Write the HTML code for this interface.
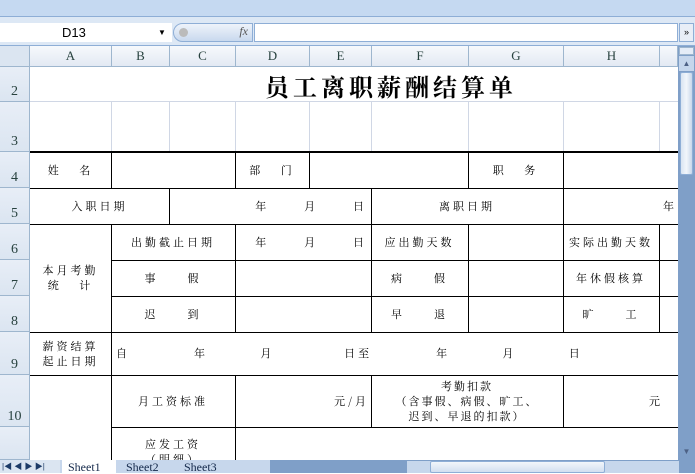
<!DOCTYPE html>
<html><head><meta charset="utf-8"><style>
*{margin:0;padding:0;box-sizing:border-box}
body{width:695px;height:473px;overflow:hidden;background:#fff;position:relative;font-family:"Liberation Sans","Noto Sans CJK SC",sans-serif}
.a{position:absolute}
.t{position:absolute;font-family:"Noto Serif CJK SC","Liberation Serif",serif;font-size:11px;letter-spacing:3px;color:#000;white-space:nowrap;display:flex;align-items:center;justify-content:center;text-align:center;line-height:15px}
.h{position:absolute;left:0;width:30px;background:linear-gradient(#e8eef7,#dbe5f1);border-bottom:1px solid #9eb6ce;border-right:1px solid #9eb6ce;font-family:"Liberation Serif",serif;font-size:14px;color:#27413e;text-align:center;display:flex;align-items:flex-end;justify-content:center;padding-bottom:1px}
.c{position:absolute;top:46px;height:21px;background:linear-gradient(#f7f9fc,#e3e9f3);border-right:1px solid #9eb6ce;border-bottom:1px solid #9eb6ce;font-family:"Liberation Serif",serif;font-size:13px;color:#27413e;display:flex;align-items:center;justify-content:center}
.gv{position:absolute;width:1px;background:#d0d7e5}
.gh{position:absolute;height:1px;background:#d0d7e5}
.bv{position:absolute;width:1px;background:#000}
.bh{position:absolute;height:1px;background:#000}
</style></head><body>
<div class="a" style="left:0;top:0;width:695px;height:17px;background:#c5d9f1;border-bottom:1px solid #8eaed6"></div>
<div class="a" style="left:0;top:17px;width:695px;height:29px;background:#dde8f5"></div>
<div class="a" style="left:0;top:23px;width:172px;height:19px;background:#fff;font-size:13px;padding-left:62px;line-height:19px">D13<span style="position:absolute;left:158px;top:0;font-size:8px">▼</span></div>
<div class="a" style="left:173px;top:23px;width:80px;height:19px;border-radius:10px 0 0 10px;background:linear-gradient(#eef3fa,#c9d9ee);border:1px solid #8eaed6"><span style="position:absolute;right:4px;top:0;font-family:'Liberation Serif',serif;font-style:italic;font-size:12px;color:#555">fx</span><span style="position:absolute;left:5px;top:4px;width:9px;height:9px;border-radius:50%;background:#bbb"></span></div>
<div class="a" style="left:254px;top:23px;width:424px;height:19px;background:#fff;border:1px solid #8eaed6"></div>
<div class="a" style="left:679px;top:23px;width:15px;height:19px;background:#e8eef7;border:1px solid #8eaed6;font-size:9px;text-align:center;line-height:16px">»</div>
<div class="a" style="left:0;top:42px;width:695px;height:4px;background:#dde8f5;border-bottom:1px solid #8eaed6"></div>
<div class="a" style="left:0;top:46px;width:30px;height:21px;background:#dbe5f1;border-right:1px solid #9eb6ce;border-bottom:1px solid #9eb6ce"></div>
<div class="c" style="left:30px;width:82px">A</div>
<div class="c" style="left:112px;width:58px">B</div>
<div class="c" style="left:170px;width:66px">C</div>
<div class="c" style="left:236px;width:74px">D</div>
<div class="c" style="left:310px;width:62px">E</div>
<div class="c" style="left:372px;width:97px">F</div>
<div class="c" style="left:469px;width:95px">G</div>
<div class="c" style="left:564px;width:96px">H</div>
<div class="c" style="left:660px;width:18px"></div>
<div class="h" style="top:67px;height:35px">2</div>
<div class="h" style="top:102px;height:50px">3</div>
<div class="h" style="top:152px;height:36px">4</div>
<div class="h" style="top:188px;height:36px">5</div>
<div class="h" style="top:224px;height:36px">6</div>
<div class="h" style="top:260px;height:36px">7</div>
<div class="h" style="top:296px;height:36px">8</div>
<div class="h" style="top:332px;height:43px">9</div>
<div class="h" style="top:375px;height:52px">10</div>
<div class="h" style="top:427px;height:33px"></div>
<div class="gh" style="left:30px;top:101px;width:648px"></div>
<div class="gv" style="left:111px;top:102px;height:50px"></div>
<div class="gv" style="left:169px;top:102px;height:50px"></div>
<div class="gv" style="left:235px;top:102px;height:50px"></div>
<div class="gv" style="left:309px;top:102px;height:50px"></div>
<div class="gv" style="left:371px;top:102px;height:50px"></div>
<div class="gv" style="left:468px;top:102px;height:50px"></div>
<div class="gv" style="left:563px;top:102px;height:50px"></div>
<div class="gv" style="left:659px;top:102px;height:50px"></div>
<div class="a" style="left:30px;top:66px;width:648px;height:38px;display:flex;align-items:center;justify-content:center;padding-left:74px;font-family:'Noto Serif CJK SC',serif;font-size:24px;font-weight:bold;letter-spacing:4px;color:#000">员工离职薪酬结算单</div>
<div class="bh" style="left:30px;top:151px;width:648px;height:2px"></div>
<div class="bh" style="left:30px;top:188px;width:648px"></div>
<div class="bh" style="left:30px;top:224px;width:648px"></div>
<div class="bh" style="left:111px;top:260px;width:567px"></div>
<div class="bh" style="left:111px;top:296px;width:567px"></div>
<div class="bh" style="left:30px;top:332px;width:648px"></div>
<div class="bh" style="left:30px;top:375px;width:648px"></div>
<div class="bh" style="left:111px;top:427px;width:567px"></div>
<div class="bv" style="left:111px;top:152px;height:36px"></div>
<div class="bv" style="left:235px;top:152px;height:36px"></div>
<div class="bv" style="left:309px;top:152px;height:36px"></div>
<div class="bv" style="left:468px;top:152px;height:36px"></div>
<div class="bv" style="left:563px;top:152px;height:36px"></div>
<div class="bv" style="left:169px;top:188px;height:36px"></div>
<div class="bv" style="left:371px;top:188px;height:36px"></div>
<div class="bv" style="left:563px;top:188px;height:36px"></div>
<div class="bv" style="left:111px;top:224px;height:108px"></div>
<div class="bv" style="left:235px;top:224px;height:108px"></div>
<div class="bv" style="left:371px;top:224px;height:108px"></div>
<div class="bv" style="left:468px;top:224px;height:108px"></div>
<div class="bv" style="left:563px;top:224px;height:108px"></div>
<div class="bv" style="left:659px;top:224px;height:108px"></div>
<div class="bv" style="left:111px;top:332px;height:128px"></div>
<div class="bv" style="left:235px;top:375px;height:85px"></div>
<div class="bv" style="left:371px;top:375px;height:52px"></div>
<div class="bv" style="left:563px;top:375px;height:52px"></div>
<div class="t" style="left:30px;top:152px;width:81px;height:36px">姓&nbsp;&nbsp;&nbsp;名</div>
<div class="t" style="left:235px;top:152px;width:74px;height:36px">部&nbsp;&nbsp;&nbsp;门</div>
<div class="t" style="left:468px;top:152px;width:95px;height:36px">职&nbsp;&nbsp;&nbsp;务</div>
<div class="t" style="left:30px;top:188px;width:139px;height:36px">入职日期</div>
<div class="t" style="left:169px;top:188px;width:202px;height:36px;justify-content:flex-end;padding-right:4px">年&nbsp;&nbsp;&nbsp;&nbsp;&nbsp;&nbsp;月&nbsp;&nbsp;&nbsp;&nbsp;&nbsp;&nbsp;日</div>
<div class="t" style="left:371px;top:188px;width:192px;height:36px">离职日期</div>
<div class="t" style="left:663px;top:188px;width:20px;height:36px;justify-content:flex-start">年</div>
<div class="t" style="left:30px;top:224px;width:81px;height:108px;white-space:normal;padding:0 6px;line-height:15px">本月考勤<br>统&nbsp;&nbsp;&nbsp;计</div>
<div class="t" style="left:111px;top:224px;width:124px;height:36px">出勤截止日期</div>
<div class="t" style="left:235px;top:224px;width:136px;height:36px;justify-content:flex-end;padding-right:4px">年&nbsp;&nbsp;&nbsp;&nbsp;&nbsp;&nbsp;月&nbsp;&nbsp;&nbsp;&nbsp;&nbsp;&nbsp;日</div>
<div class="t" style="left:371px;top:224px;width:97px;height:36px">应出勤天数</div>
<div class="t" style="left:563px;top:224px;width:96px;height:36px">实际出勤天数</div>
<div class="t" style="left:111px;top:260px;width:124px;height:36px">事&nbsp;&nbsp;&nbsp;&nbsp;&nbsp;假</div>
<div class="t" style="left:371px;top:260px;width:97px;height:36px">病&nbsp;&nbsp;&nbsp;&nbsp;&nbsp;假</div>
<div class="t" style="left:563px;top:260px;width:96px;height:36px">年休假核算</div>
<div class="t" style="left:111px;top:296px;width:124px;height:36px">迟&nbsp;&nbsp;&nbsp;&nbsp;&nbsp;到</div>
<div class="t" style="left:371px;top:296px;width:97px;height:36px">早&nbsp;&nbsp;&nbsp;&nbsp;&nbsp;退</div>
<div class="t" style="left:563px;top:296px;width:96px;height:36px">旷&nbsp;&nbsp;&nbsp;&nbsp;&nbsp;工</div>
<div class="t" style="left:30px;top:332px;width:81px;height:43px">薪资结算<br>起止日期</div>
<div class="t" style="left:116px;top:332px;width:400px;height:43px;justify-content:flex-start">自&nbsp;&nbsp;&nbsp;&nbsp;&nbsp;&nbsp;&nbsp;&nbsp;&nbsp;&nbsp;&nbsp;年&nbsp;&nbsp;&nbsp;&nbsp;&nbsp;&nbsp;&nbsp;&nbsp;&nbsp;月&nbsp;&nbsp;&nbsp;&nbsp;&nbsp;&nbsp;&nbsp;&nbsp;&nbsp;&nbsp;&nbsp;&nbsp;日至&nbsp;&nbsp;&nbsp;&nbsp;&nbsp;&nbsp;&nbsp;&nbsp;&nbsp;&nbsp;&nbsp;年&nbsp;&nbsp;&nbsp;&nbsp;&nbsp;&nbsp;&nbsp;&nbsp;&nbsp;月&nbsp;&nbsp;&nbsp;&nbsp;&nbsp;&nbsp;&nbsp;&nbsp;&nbsp;日</div>
<div class="t" style="left:111px;top:375px;width:124px;height:52px">月工资标准</div>
<div class="t" style="left:235px;top:375px;width:136px;height:52px;justify-content:flex-end;padding-right:2px">元/月</div>
<div class="t" style="left:371px;top:375px;width:192px;height:52px;flex-direction:column;letter-spacing:2px">考勤扣款<br>（含事假、病假、旷工、<br>迟到、早退的扣款）</div>
<div class="t" style="left:563px;top:375px;width:100px;height:52px;justify-content:flex-end;padding-right:0">元</div>
<div class="t" style="left:111px;top:437px;width:124px;height:30px;align-items:flex-start">应发工资<br>（明细）</div>
<!-- vertical scrollbar -->
<div class="a" style="left:678px;top:46px;width:17px;height:414px;background:#7f9fc8"></div>
<div class="a" style="left:679px;top:47px;width:15px;height:8px;background:#e4ecf7;border:1px solid #9eb6ce"></div>
<div class="a" style="left:679px;top:56px;width:15px;height:15px;background:#c5d6ec;font-size:8px;text-align:center;line-height:15px;color:#4d6185">▲</div>
<div class="a" style="left:680px;top:72px;width:13px;height:103px;border-radius:2px;background:linear-gradient(90deg,#d9e4f2,#f2f6fb,#c8d7ea);border:1px solid #8eaed6"></div>
<div class="a" style="left:679px;top:444px;width:15px;height:15px;font-size:8px;text-align:center;line-height:15px;color:#4d6185">▼</div>
<!-- tab bar -->
<div class="a" style="left:0;top:460px;width:695px;height:13px;background:#7f9fc8"></div>
<div class="a" style="left:0;top:460px;width:60px;height:13px;background:#dbe5f1;font-size:8px;color:#1d3b67;line-height:13px;white-space:nowrap;overflow:hidden;padding-left:2px">|◀&nbsp;◀&nbsp;▶&nbsp;▶|</div>
<div class="a" style="left:60px;top:460px;width:210px;height:13px;background:#c7d7ec"></div>
<div class="a" style="left:62px;top:460px;width:54px;height:13px;background:#fff;font-family:'Liberation Serif',serif;font-size:12px;line-height:14px;padding-left:6px;color:#13284a">Sheet1</div>
<div class="a" style="left:120px;top:460px;width:56px;height:13px;font-family:'Liberation Serif',serif;font-size:12px;line-height:14px;padding-left:6px;color:#13284a">Sheet2</div>
<div class="a" style="left:178px;top:460px;width:56px;height:13px;font-family:'Liberation Serif',serif;font-size:12px;line-height:14px;padding-left:6px;color:#13284a">Sheet3</div>
<div class="a" style="left:407px;top:461px;width:272px;height:12px;background:#c7d7ec"></div>
<div class="a" style="left:430px;top:461px;width:175px;height:12px;background:linear-gradient(#f2f6fb,#d2dff0);border:1px solid #8eaed6;border-radius:2px"></div>
</body></html>
